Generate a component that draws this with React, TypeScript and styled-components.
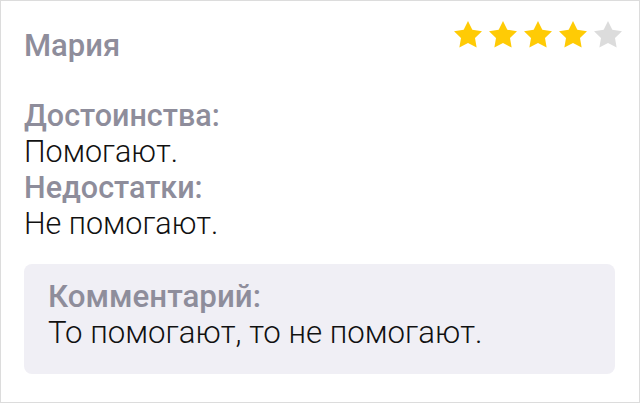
import React from "react";
import styled, { createGlobalStyle } from "styled-components";

const GlobalStyle = createGlobalStyle`
  body {
    margin: 0;
    background: #ffffff;
    font-family: Roboto, "Liberation Sans", sans-serif;
  }
`;

const Card = styled.div`
  box-sizing: border-box;
  width: 640px;
  height: 403px;
  border: 1px solid #dcdcdc;
  background: #ffffff;
  padding: 27px 24px 0 23px;
  display: flex;
  flex-direction: column;
`;

const Header = styled.div`
  display: flex;
  justify-content: space-between;
  align-items: flex-start;
`;

const Name = styled.div`
  font-size: 31px;
  line-height: 36px;
  font-weight: 500;
  color: #8e8d9b;
`;

const Stars = styled.div`
  display: flex;
  gap: 7px;
  margin-top: -7px;
  margin-right: -7px;
`;

const Reviews = styled.div`
  margin-top: 34px;
  display: flex;
  flex-direction: column;
`;

const Label = styled.div<{ $size?: number }>`
  font-size: ${(p) => p.$size ?? 30.5}px;
  line-height: 36px;
  font-weight: 500;
  color: #8e8d9b;
`;

const Text = styled.div<{ $size?: number }>`
  font-size: ${(p) => p.$size ?? 30.5}px;
  line-height: 36px;
  font-weight: 300;
  color: #111111;
`;

const Comment = styled.div`
  margin-top: 22px;
  background: #f0eff5;
  border-radius: 8px;
  padding: 15px 24px 23px;
`;

const Star: React.FC<{ filled: boolean }> = ({ filled }) => (
  <svg width="28" height="27" viewBox="2 2 20 19.3">
    <polygon
      points="12,2 15.09,8.26 22,9.27 17,14.14 18.18,21.02 12,17.77 5.82,21.02 7,14.14 2,9.27 8.91,8.26"
      fill={filled ? "#ffcb05" : "#dcdcdc"}
    />
  </svg>
);

const App: React.FC = () => {
  const rating = 4;

  return (
    <>
      <GlobalStyle />
      <Card>
        <Header>
          <Name>Мария</Name>
          <Stars>
            {[1, 2, 3, 4, 5].map((n) => (
              <Star key={n} filled={n <= rating} />
            ))}
          </Stars>
        </Header>
        <Reviews>
          <Label>Достоинства:</Label>
          <Text>Помогают.</Text>
          <Label>Недостатки:</Label>
          <Text>Не помогают.</Text>
        </Reviews>
        <Comment>
          <Label $size={31.3}>Комментарий:</Label>
          <Text $size={31.2}>То помогают, то не помогают.</Text>
        </Comment>
      </Card>
    </>
  );
};

export default App;
